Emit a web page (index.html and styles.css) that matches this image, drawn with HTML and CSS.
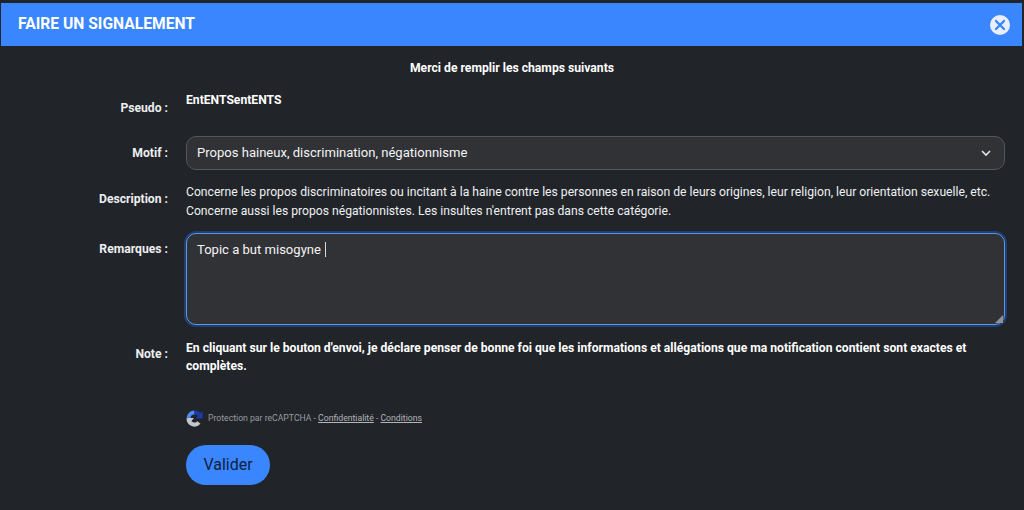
FILE: index.html
```html
<!DOCTYPE html>
<html lang="fr">
<head>
<meta charset="utf-8">
<title>Faire un signalement</title>
<link rel="stylesheet" href="styles.css">
</head>
<body>
<div class="modal">
  <header class="head">
    <h1 class="title">FAIRE UN SIGNALEMENT</h1>
    <span class="close">
      <svg width="20" height="20" viewBox="0 0 20 20"><circle cx="10" cy="10" r="10" fill="#e9effa"/><path d="M6 6l8 8M14 6l-8 8" stroke="#3a86ff" stroke-width="2.4" stroke-linecap="round" fill="none"/></svg>
    </span>
  </header>
  <p class="intro">Merci de remplir les champs suivants</p>
  <div class="row row-pseudo">
    <div class="label label-pseudo">Pseudo :</div>
    <div class="value strong">EntENTSentENTS</div>
  </div>
  <div class="row row-motif">
    <div class="label label-motif">Motif :</div>
    <div class="select">
      <span class="select-text">Propos haineux, discrimination, négationnisme</span>
      <svg width="12" height="8" viewBox="0 0 12 8"><path d="M2 2l4 4 4-4" stroke="#e4e5e7" stroke-width="1.600" fill="none"/></svg>
    </div>
  </div>
  <div class="row row-desc">
    <div class="label label-desc">Description :</div>
    <div class="value desc">Concerne les propos discriminatoires ou incitant à la haine contre les personnes en raison de leurs origines, leur religion, leur orientation sexuelle, etc.<br>Concerne aussi les propos négationnistes. Les insultes n'entrent pas dans cette catégorie.</div>
  </div>
  <div class="row row-rem">
    <div class="label label-rem">Remarques :</div>
    <div class="textarea">
      <span>Topic a but misogyne</span><i class="caret"></i>
      <svg class="grip" width="8" height="8" viewBox="0 0 8 8"><path d="M8 0v8H0z" fill="#8d9097"/></svg>
    </div>
  </div>
  <div class="row row-note">
    <div class="label label-note">Note :</div>
    <div class="value strong note">En cliquant sur le bouton d'envoi, je déclare penser de bonne foi que les informations et allégations que ma notification contient sont exactes et complètes.</div>
  </div>
  <div class="row row-captcha">
    <div></div>
    <div class="captcha">
      <svg width="17" height="17" viewBox="0 0 17 17">
        <path d="M2.500 8.500A6 6 0 0 1 8.500 2.500" stroke="#4a8af4" stroke-width="4" fill="none"/>
        <path d="M8.500 2.500A6 6 0 0 1 14 6" stroke="#1c3aa9" stroke-width="4" fill="none"/>
        <path d="M16.500 1v7.500H9.500z" fill="#1c3aa9"/>
        <path d="M2.500 8.500A6 6 0 0 0 13 12.500" stroke="#c4c7cc" stroke-width="4" fill="none"/>
        <path d="M1 8h7L5 11.500z" fill="#c4c7cc"/>
      </svg>
      <span class="captcha-text">Protection par reCAPTCHA - <a class="link">Confidentialité</a> - <a class="link">Conditions</a></span>
    </div>
  </div>
  <div class="row row-btn">
    <div></div>
    <div><button class="btn" type="button">Valider</button></div>
  </div>
</div>
</body>
</html>
```
FILE: styles.css
```css
* { box-sizing: border-box; }
html, body { margin: 0; height: 510px; overflow: hidden; background: #212429; }
body { font-family: Roboto, "Liberation Sans", sans-serif; color: #f4f5f6; font-size: 13px; }
.modal { padding-top: 3px; }
.head {
  height: 43px; margin: 0 2px 0 1px; padding: 0 12px 0 17px;
  background: #3a86ff; display: flex; align-items: center; justify-content: space-between;
}
.title { margin: 0 0 1px; font-size: 15.650px; font-weight: 700; color: #fff; line-height: 20px; }
.close { display: flex; }
.intro { margin: 15px 0 0; text-align: center; font-weight: 700; font-size: 12.170px; line-height: 15px; color: #fff; }
.row { display: grid; grid-template-columns: 168px 819px; column-gap: 18px; }
.label { text-align: right; font-weight: 700; font-size: 12.170px; line-height: 15px; color: #eceef0; }
.strong { font-weight: 700; font-size: 12.150px; color: #fff; }
.row-pseudo { margin-top: 17px; height: 43px; }
.value { line-height: 15px; }
.label-pseudo { padding-top: 8px; }
.row-motif { height: 34px; }
.label-motif { padding-top: 10px; }
.select {
  height: 34px; border: 1px solid #54565b; border-radius: 10px; background: #313236;
  display: flex; align-items: center; justify-content: space-between;
  padding: 0 12px 0 10px; font-size: 13.050px; color: #f4f5f6;
}
.select-text { margin-top: -1px; }
.row-desc { margin-top: 13px; height: 50px; }
.desc { font-size: 12.170px; line-height: 19px; color: #eef0f2; }
.label-desc { padding-top: 9px; }
.row-rem { height: 92px; }
.label-rem { padding-top: 9px; }
.textarea {
  position: relative; height: 92px; border: 1px solid #5f95e8; border-radius: 10px;
  background: #313236; box-shadow: 0 0 0 2px #1e3f70;
  padding: 8px 10px; font-size: 13.050px; line-height: 16px; color: #f4f5f6;
}
.caret { display: inline-block; width: 1px; height: 15px; background: #d8d9db; margin-left: 4px; vertical-align: -3px; }
.grip { position: absolute; right: 1px; bottom: 1px; }
.row-note { margin-top: 14px; height: 50px; }
.note { line-height: 18px; }
.label-note { padding-top: 8px; }
.row-captcha { margin-top: 21px; height: 20px; }
.captcha { display: flex; align-items: center; gap: 5px; height: 17px; font-size: 8.670px; color: #9a9ca1; }
.captcha-text { margin-top: -2px; }
.link { color: #b3b5b9; text-decoration: underline; }
.row-btn { margin-top: 15px; }
.btn {
  display: block; width: 84px; height: 40px; border: 0; border-radius: 20px; padding: 0 0 2px;
  background: #3a86ff; color: #10203f; font: 400 16px Roboto, "Liberation Sans", sans-serif;
}
```
